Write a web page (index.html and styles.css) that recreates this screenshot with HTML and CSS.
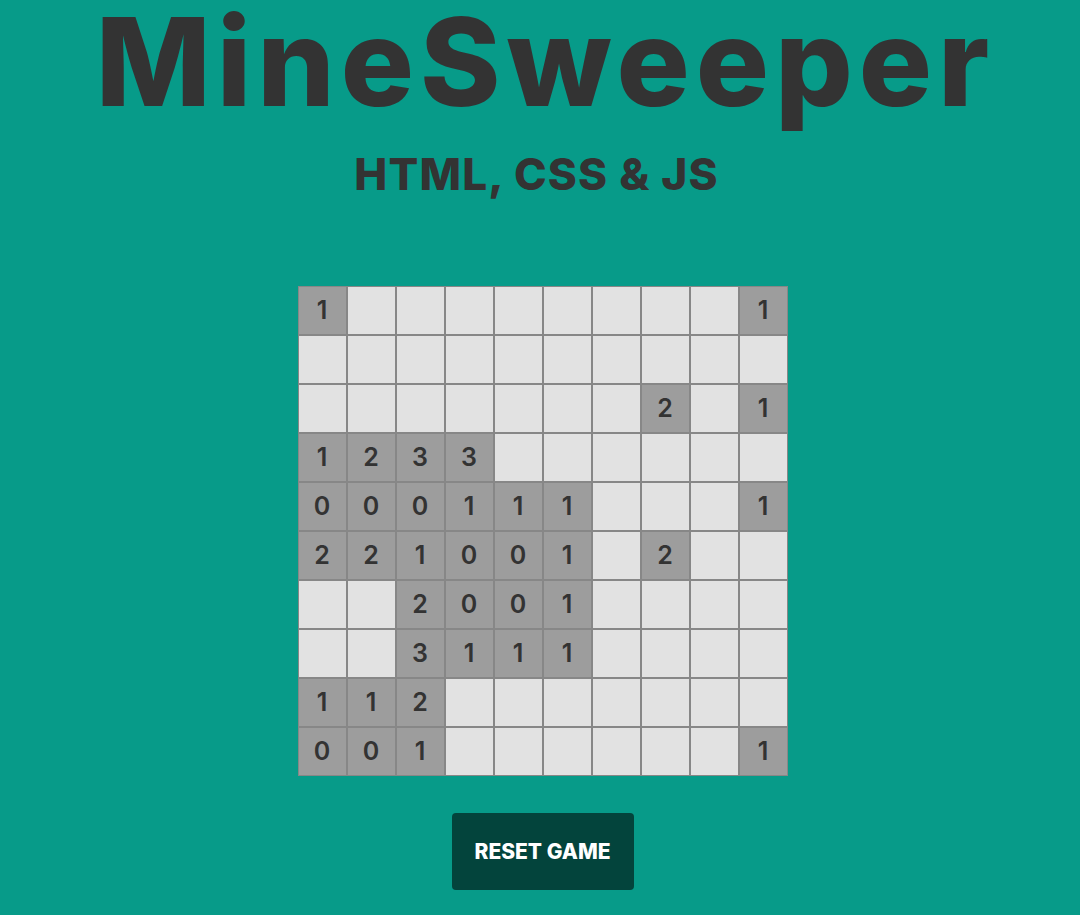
FILE: index.html
```html
<!DOCTYPE html>
<html lang="en">
<head>
<meta charset="utf-8">
<title>MineSweeper</title>
<link rel="stylesheet" href="styles.css">
</head>
<body>
<main class="page">
  <h1 class="title">MineSweeper</h1>
  <h2 class="subtitle">HTML, CSS &amp; JS</h2>
  <div class="board">
    <div class="cell open">1</div><div class="cell"></div><div class="cell"></div><div class="cell"></div><div class="cell"></div><div class="cell"></div><div class="cell"></div><div class="cell"></div><div class="cell"></div><div class="cell open">1</div>
    <div class="cell"></div><div class="cell"></div><div class="cell"></div><div class="cell"></div><div class="cell"></div><div class="cell"></div><div class="cell"></div><div class="cell"></div><div class="cell"></div><div class="cell"></div>
    <div class="cell"></div><div class="cell"></div><div class="cell"></div><div class="cell"></div><div class="cell"></div><div class="cell"></div><div class="cell"></div><div class="cell open">2</div><div class="cell"></div><div class="cell open">1</div>
    <div class="cell open">1</div><div class="cell open">2</div><div class="cell open">3</div><div class="cell open">3</div><div class="cell"></div><div class="cell"></div><div class="cell"></div><div class="cell"></div><div class="cell"></div><div class="cell"></div>
    <div class="cell open">0</div><div class="cell open">0</div><div class="cell open">0</div><div class="cell open">1</div><div class="cell open">1</div><div class="cell open">1</div><div class="cell"></div><div class="cell"></div><div class="cell"></div><div class="cell open">1</div>
    <div class="cell open">2</div><div class="cell open">2</div><div class="cell open">1</div><div class="cell open">0</div><div class="cell open">0</div><div class="cell open">1</div><div class="cell"></div><div class="cell open">2</div><div class="cell"></div><div class="cell"></div>
    <div class="cell"></div><div class="cell"></div><div class="cell open">2</div><div class="cell open">0</div><div class="cell open">0</div><div class="cell open">1</div><div class="cell"></div><div class="cell"></div><div class="cell"></div><div class="cell"></div>
    <div class="cell"></div><div class="cell"></div><div class="cell open">3</div><div class="cell open">1</div><div class="cell open">1</div><div class="cell open">1</div><div class="cell"></div><div class="cell"></div><div class="cell"></div><div class="cell"></div>
    <div class="cell open">1</div><div class="cell open">1</div><div class="cell open">2</div><div class="cell"></div><div class="cell"></div><div class="cell"></div><div class="cell"></div><div class="cell"></div><div class="cell"></div><div class="cell"></div>
    <div class="cell open">0</div><div class="cell open">0</div><div class="cell open">1</div><div class="cell"></div><div class="cell"></div><div class="cell"></div><div class="cell"></div><div class="cell"></div><div class="cell"></div><div class="cell open">1</div>
  </div>
  <button class="reset" type="button">RESET GAME</button>
</main>
</body>
</html>
```
FILE: styles.css
```css
* { box-sizing: border-box; }
html, body {
  margin: 0;
  padding: 0;
  background: #079b89;
  height: 100%;
}
body {
  font-family: Inter, "DejaVu Sans", sans-serif;
  color: #333333;
  overflow: hidden;
}
.page {
  display: flex;
  flex-direction: column;
  align-items: center;
  padding-left: 5px;
}
.title {
  margin: -11px 0 0;
  font-size: 122px;
  line-height: 1.2;
  font-weight: 800;
  letter-spacing: 6px;
  text-indent: 6px;
}
.subtitle {
  margin: 13px 12px 0 0;
  font-size: 44px;
  line-height: 1.21;
  font-weight: 800;
  letter-spacing: 1.2px;
}
.board {
  margin-top: 84px;
  display: grid;
  grid-template-columns: repeat(10, 49px);
  grid-auto-rows: 49px;
}
.cell {
  border: 1px solid #878787;
  background: #e2e2e2;
  display: flex;
  align-items: center;
  justify-content: center;
  font-size: 25px;
  font-weight: 600;
  color: #333333;
}
.cell.open {
  background: #9d9d9d;
}
.reset {
  margin-top: 37px;
  width: 182px;
  height: 77px;
  border: none;
  border-radius: 4px;
  background: #03443c;
  color: #ffffff;
  font-family: Inter, "DejaVu Sans", sans-serif;
  font-size: 21px;
  font-weight: 800;
  letter-spacing: 0;
}
```
